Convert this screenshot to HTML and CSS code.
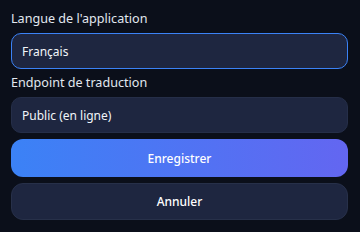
FILE: index.html
```html
<!DOCTYPE html>
<html lang="fr">
<head>
    <meta charset="UTF-8">
    <meta name="viewport" content="width=device-width, initial-scale=1.0">
    <title>Paramètres</title>
    <link rel="stylesheet" href="styles.css">
</head>
<body>
    <!-- Settings form -->
    <form class="settings">
        <label class="field-label" for="lang">Langue de l'application</label>
        <div class="field field-focus" id="lang">Français</div>

        <label class="field-label label-second" for="endpoint">Endpoint de traduction</label>
        <div class="field" id="endpoint">Public (en ligne)</div>

        <button type="button" class="btn btn-primary">Enregistrer</button>
        <button type="button" class="btn btn-secondary">Annuler</button>
    </form>
</body>
</html>
```

FILE: styles.css
```css
body {
    margin: 0;
    padding: 10px 12px 0 11px;
    background-color: #0b0f1a;
    font-family: "Noto Sans", "Open Sans", sans-serif;
    color: #e5e9f0;
}
.settings {
    display: flex;
    flex-direction: column;
}
.field-label {
    display: block;
    font-size: 12.6px;
    line-height: 18px;
    margin-bottom: 5px;
    color: #e2e8f0;
}
.label-second {
    margin-top: 5px;
}
.field {
    box-sizing: border-box;
    height: 36px;
    padding: 0 10px;
    display: flex;
    align-items: center;
    font-size: 12px;
    color: #f1f5f9;
    background-color: #1e2640;
    border: 1px solid #252e48;
    border-radius: 10px;
}
.field-focus {
    border-color: #3b82f6;
}
.btn {
    box-sizing: border-box;
    height: 38px;
    margin-top: 6px;
    font-family: inherit;
    font-size: 12px;
    font-weight: 500;
    color: #ffffff;
    border-radius: 12px;
    cursor: pointer;
}
.btn-primary {
    border: none;
    background: linear-gradient(90deg, #3b82f6, #6366f1);
}
.btn-secondary {
    height: 37px;
    background-color: #1e2640;
    border: 1px solid #273049;
}
```
